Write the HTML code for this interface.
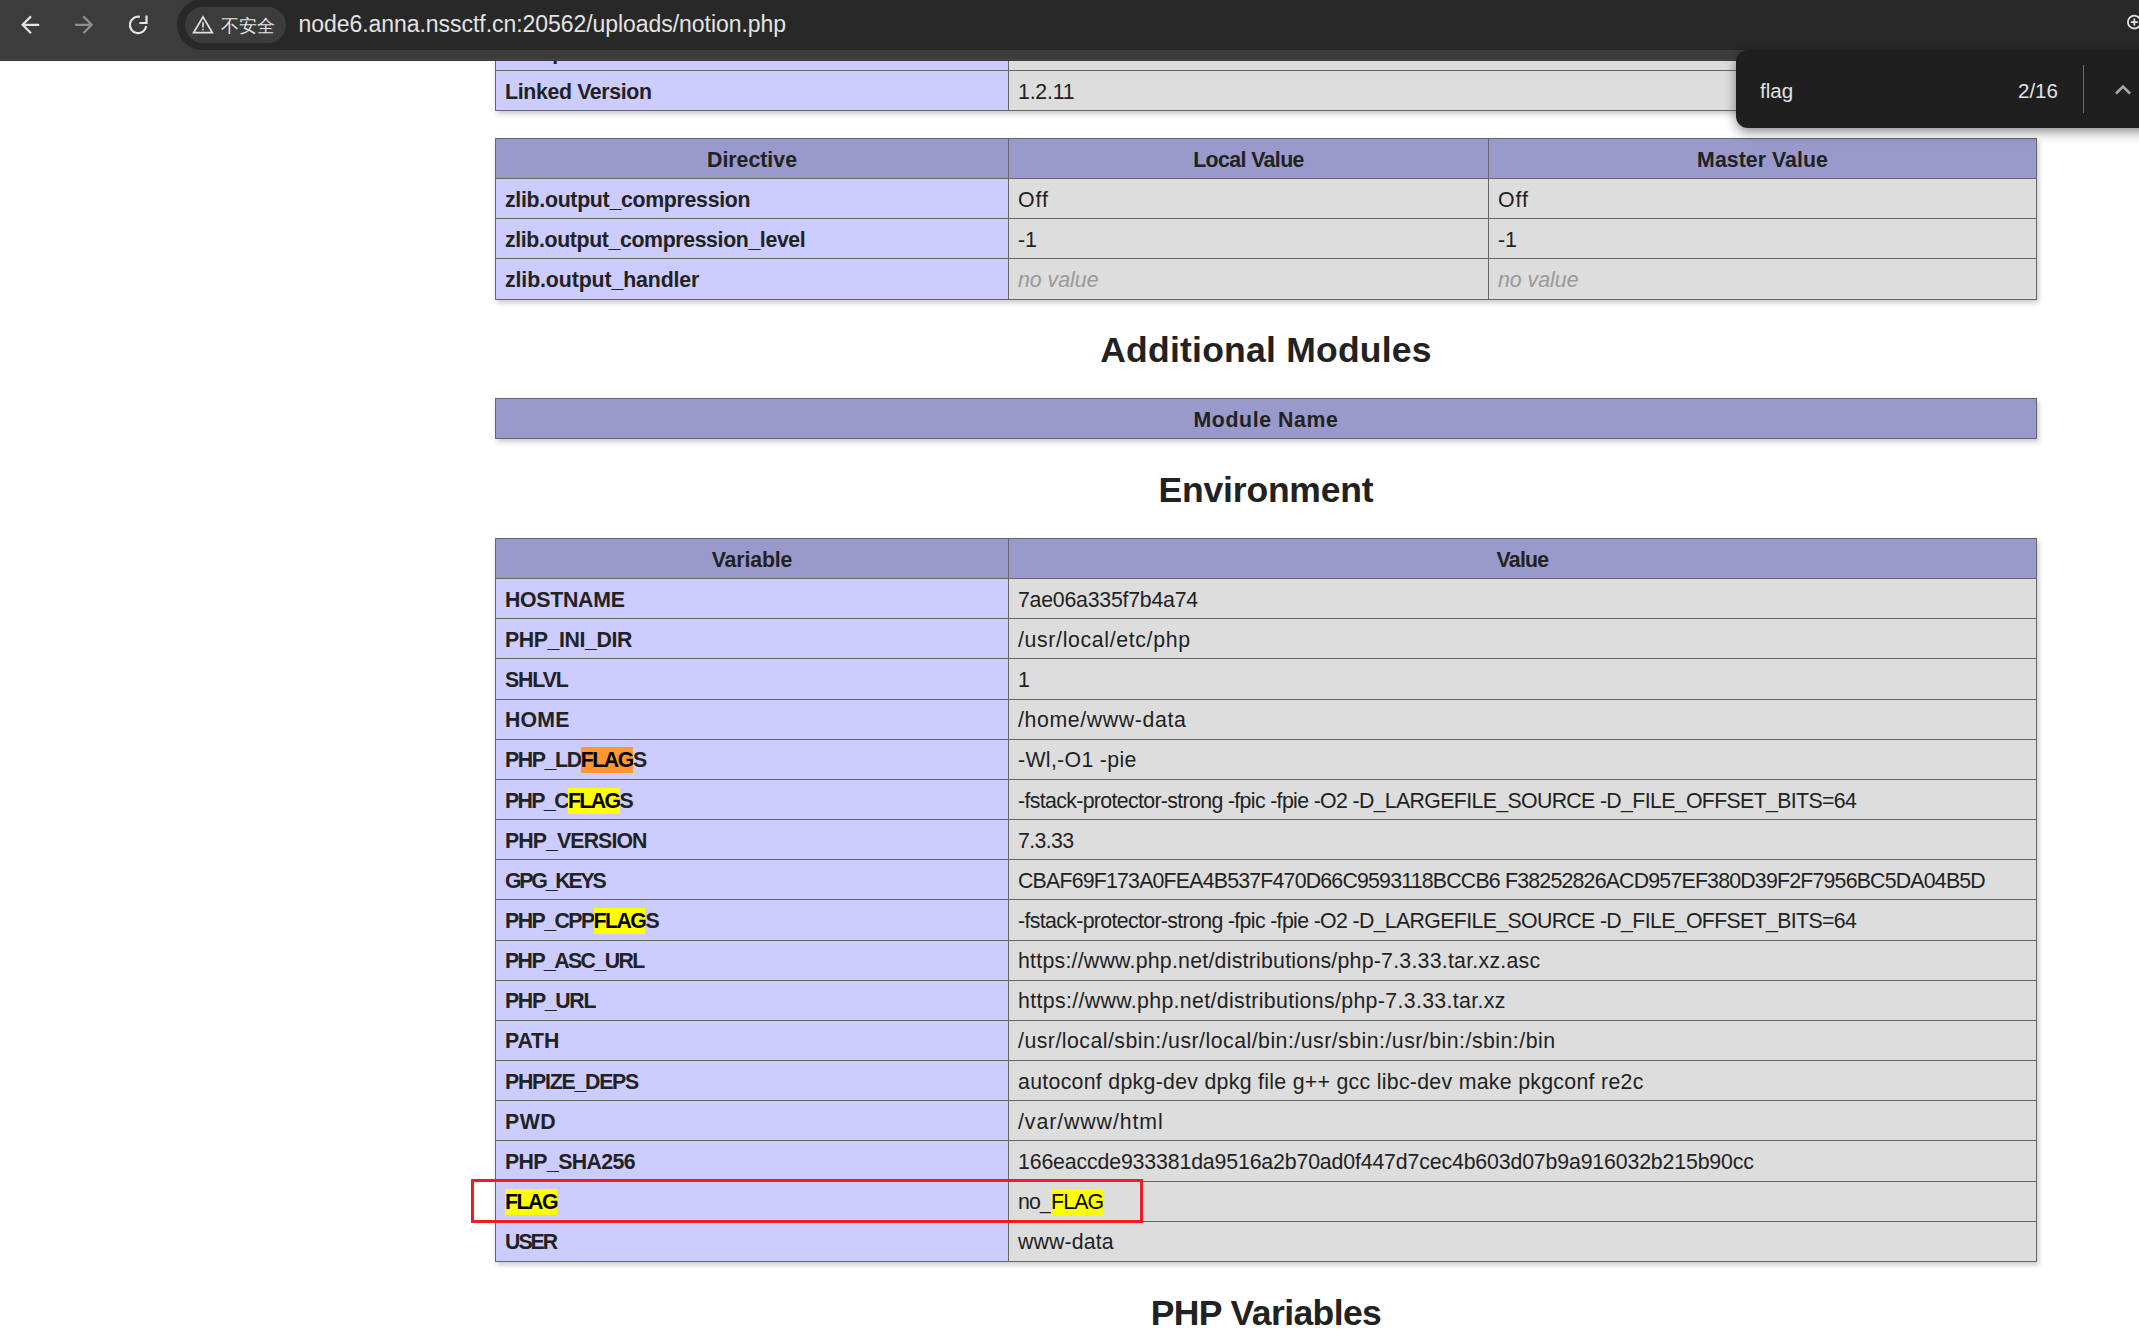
<!DOCTYPE html>
<html><head><meta charset="utf-8">
<style>
html,body{margin:0;padding:0;}
body{width:2139px;height:1329px;overflow:hidden;position:relative;background:#fff;color:#222;font-family:"Liberation Sans",sans-serif;}
#tb{position:absolute;left:0;top:0;width:2139px;height:61px;background:#3c3c3c;z-index:5;}
#omni{position:absolute;left:177px;top:-1px;width:2100px;height:51px;border-radius:26px;background:#282828;}
#chip{position:absolute;left:185px;top:7px;width:101px;height:36px;border-radius:18px;background:#3c3c3c;}
#url{position:absolute;left:298.5px;top:10px;font-size:23px;letter-spacing:-0.05px;color:#e3e3e3;white-space:nowrap;line-height:28px;}
#insec{position:absolute;left:221px;top:13.8px;font-size:18px;line-height:24px;color:#e3e3e3;}
#find{position:absolute;left:1736px;top:50px;width:440px;height:78px;border-radius:12px;background:#1f1f1f;z-index:6;box-shadow:0 4px 12px rgba(0,0,0,.45);}
#find div.ft{position:absolute;font-size:20.5px;line-height:24px;color:#e3e3e3;white-space:nowrap;}
table{border-collapse:collapse;border:0;box-shadow:2px 3px 5px #ccc;position:absolute;left:495px;width:1542px;}
td,th{border:1px solid #666;font-size:21.3px;padding:2px 0 0 9px;height:40.17px;box-sizing:border-box;vertical-align:middle;line-height:24px;white-space:nowrap;}
th{text-align:center;padding:2px 0 0 0;}
.e{background:#ccf;font-weight:bold;}
.h{background:#99c;font-weight:bold;}
.v{background:#ddd;}
.v i{color:#999;}
h2{position:absolute;left:495px;width:1542px;text-align:center;font-size:35.5px;margin:0;line-height:40px;}
b.y,b.o{font-weight:inherit;color:#000;padding:1px 0;}
b.y{background:#ff0;}
b.o{background:#ff9632;}
#red{position:absolute;left:471px;top:1179px;width:672px;height:44px;border:3px solid #ee1c25;box-sizing:border-box;}
</style></head><body>
<div id="content">
<table style="top:30px">
<tr><td class="e" style="width:513px">Compiled Version</td><td class="v">1.2.11</td></tr>
<tr><td class="e"><span id="lv" style="letter-spacing:-0.346px">Linked Version</span></td><td class="v"><span id="lvv" style="letter-spacing:-0.200px">1.2.11</span></td></tr>
</table>
<table style="top:138px">
<tr class="h"><th style="width:513px"><span id="h1" style="letter-spacing:0.000px">Directive</span></th><th style="width:480px"><span id="h2" style="letter-spacing:-0.600px">Local Value</span></th><th><span id="h3" style="letter-spacing:0.045px">Master Value</span></th></tr>
<tr><td class="e"><span id="z1" style="letter-spacing:-0.295px">zlib.output_compression</span></td><td class="v"><span id="z1a" style="letter-spacing:1.000px">Off</span></td><td class="v"><span id="z1b" style="letter-spacing:1.000px">Off</span></td></tr>
<tr><td class="e"><span id="z2" style="letter-spacing:-0.375px">zlib.output_compression_level</span></td><td class="v">-1</td><td class="v">-1</td></tr>
<tr><td class="e"><span id="z3" style="letter-spacing:-0.111px">zlib.output_handler</span></td><td class="v"><i><span id="z3a" style="letter-spacing:-0.000px">no value</span></i></td><td class="v"><i><span id="z3b">no value</span></i></td></tr>
</table>
<h2 style="top:330px"><span id="hA" style="letter-spacing:0.235px">Additional Modules</span></h2>
<table style="top:398px">
<tr class="h"><th><span id="h4" style="letter-spacing:0.600px">Module Name</span></th></tr>
</table>
<h2 style="top:470px"><span id="hB" style="letter-spacing:-0.200px">Environment</span></h2>
<table style="top:538px">
<tr class="h"><th style="width:513px"><span id="h5" style="letter-spacing:-0.143px">Variable</span></th><th><span id="h6" style="letter-spacing:-0.750px">Value</span></th></tr>
<tr><td class="e"><span id="el0" style="letter-spacing:-0.286px">HOSTNAME</span></td><td class="v"><span id="ev0" style="letter-spacing:-0.233px">7ae06a335f7b4a74</span></td></tr>
<tr><td class="e"><span id="el1" style="letter-spacing:-0.400px">PHP_INI_DIR</span></td><td class="v"><span id="ev1" style="letter-spacing:0.647px">/usr/local/etc/php</span></td></tr>
<tr><td class="e"><span id="el2" style="letter-spacing:-1.125px">SHLVL</span></td><td class="v"><span id="ev2" style="letter-spacing:-5.000px">1</span></td></tr>
<tr><td class="e"><span id="el3" style="letter-spacing:0.167px">HOME</span></td><td class="v"><span id="ev3" style="letter-spacing:0.615px">/home/www-data</span></td></tr>
<tr><td class="e"><span id="el4" style="letter-spacing:-1.400px">PHP_LD<b class="o">FLAG</b>S</span></td><td class="v"><span id="ev4" style="letter-spacing:0.318px">-Wl,-O1 -pie</span></td></tr>
<tr><td class="e"><span id="el5" style="letter-spacing:-1.611px">PHP_C<b class="y">FLAG</b>S</span></td><td class="v"><span id="ev5" style="letter-spacing:-0.646px">-fstack-protector-strong -fpic -fpie -O2 -D_LARGEFILE_SOURCE -D_FILE_OFFSET_BITS=64</span></td></tr>
<tr><td class="e"><span id="el6" style="letter-spacing:-0.900px">PHP_VERSION</span></td><td class="v"><span id="ev6" style="letter-spacing:-0.600px">7.3.33</span></td></tr>
<tr><td class="e"><span id="el7" style="letter-spacing:-2.214px">GPG_KEYS</span></td><td class="v"><span id="ev7" style="letter-spacing:-0.788px">CBAF69F173A0FEA4B537F470D66C9593118BCCB6 F38252826ACD957EF380D39F2F7956BC5DA04B5D</span></td></tr>
<tr><td class="e"><span id="el8" style="letter-spacing:-1.545px">PHP_CPP<b class="y">FLAG</b>S</span></td><td class="v"><span id="ev8" style="letter-spacing:-0.646px">-fstack-protector-strong -fpic -fpie -O2 -D_LARGEFILE_SOURCE -D_FILE_OFFSET_BITS=64</span></td></tr>
<tr><td class="e"><span id="el9" style="letter-spacing:-1.600px">PHP_ASC_URL</span></td><td class="v"><span id="ev9" style="letter-spacing:0.241px">https://www.php.net/distributions/php-7.3.33.tar.xz.asc</span></td></tr>
<tr><td class="e"><span id="el10" style="letter-spacing:-1.333px">PHP_URL</span></td><td class="v"><span id="ev10" style="letter-spacing:0.350px">https://www.php.net/distributions/php-7.3.33.tar.xz</span></td></tr>
<tr><td class="e"><span id="el11" style="letter-spacing:-0.167px">PATH</span></td><td class="v"><span id="ev11" style="letter-spacing:0.475px">/usr/local/sbin:/usr/local/bin:/usr/sbin:/usr/bin:/sbin:/bin</span></td></tr>
<tr><td class="e"><span id="el12" style="letter-spacing:-1.250px">PHPIZE_DEPS</span></td><td class="v"><span id="ev12" style="letter-spacing:0.295px">autoconf dpkg-dev dpkg file g++ gcc libc-dev make pkgconf re2c</span></td></tr>
<tr><td class="e"><span id="el13" style="letter-spacing:0.500px">PWD</span></td><td class="v"><span id="ev13" style="letter-spacing:0.917px">/var/www/html</span></td></tr>
<tr><td class="e"><span id="el14" style="letter-spacing:-0.611px">PHP_SHA256</span></td><td class="v"><span id="ev14" style="letter-spacing:-0.143px">166eaccde933381da9516a2b70ad0f447d7cec4b603d07b9a916032b215b90cc</span></td></tr>
<tr><td class="e"><span id="el15" style="letter-spacing:-1.500px"><b class="y">FLAG</b></span></td><td class="v"><span id="ev15" style="letter-spacing:-0.833px">no_<b class="y">FLAG</b></span></td></tr>
<tr><td class="e"><span id="el16" style="letter-spacing:-2.000px">USER</span></td><td class="v"><span id="ev16" style="letter-spacing:0.143px">www-data</span></td></tr>
</table>
<h2 style="top:1293px"><span id="hC" style="letter-spacing:-0.583px">PHP Variables</span></h2>
<div id="red"></div>
</div>
<div id="tb">
  <div style="position:absolute;left:0;top:59px;width:2139px;height:1px;background:#454746"></div>
  <div style="position:absolute;left:0;top:60px;width:2139px;height:1px;background:#393b3a"></div>
  <div id="omni"></div>
  <div id="chip"></div>
  <div id="insec">不安全</div>
  <svg width="2139" height="61" style="position:absolute;left:0;top:0" fill="none" stroke-linecap="butt">
    <g stroke="#e3e3e3" stroke-width="2.2"><path d="M39.2 24.8H22.5M31 16.4L22.6 24.8L31 33.2"/></g>
    <g stroke="#8e8e8e" stroke-width="2.2"><path d="M74.9 24.8H91.6M83.3 16.4L91.7 24.8L83.3 33.2"/></g>
    <g stroke="#e3e3e3" stroke-width="2.2"><path d="M139.8 16.9A8.2 8.2 0 1 0 146.2 26.2"/><path d="M146.5 15.6V23H139.4"/></g>
    <g stroke="#e3e3e3" stroke-width="1.7" stroke-linejoin="miter"><path d="M203 16.9L193.6 32.7H212.4Z"/></g>
    <path d="M203 22.2V27.6" stroke="#e3e3e3" stroke-width="1.6"/>
    <rect x="202.2" y="28.8" width="1.6" height="1.6" fill="#e3e3e3"/>
    <circle cx="2134.3" cy="22.1" r="6.4" stroke="#e3e3e3" stroke-width="1.8"/>
    <path d="M2134.3 18.6V25.6M2130.8 22.1H2137.8" stroke="#e3e3e3" stroke-width="1.8"/>
  </svg>
  <div id="url">node6.anna.nssctf.cn:20562/uploads/notion.php</div>
</div>
<div id="find">
  <div class="ft" style="left:24px;top:29px">flag</div>
  <div class="ft" style="left:282px;top:29px">2/16</div>
  <div style="position:absolute;left:347px;top:15px;width:1px;height:48px;background:#6e6e6e"></div>
  <svg style="position:absolute;left:0;top:0" width="440" height="78" fill="none"><path d="M380 43.5L387 36.5L394 43.5" stroke="#a8a8a8" stroke-width="2.6"/></svg>
</div>
</body></html>
